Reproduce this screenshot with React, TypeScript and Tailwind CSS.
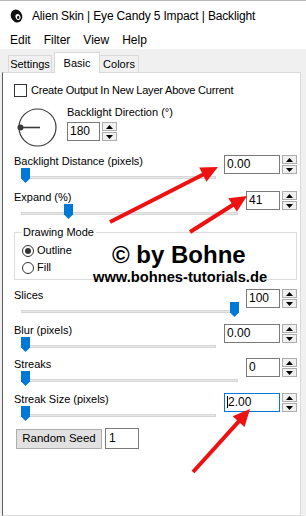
import React from 'react';

const ui = "font-['Liberation_Sans',Arial,sans-serif]";

function Tri({ up }: { up: boolean }) {
  return (
    <svg width="7" height="4" viewBox="0 0 7 4">
      <path d={up ? 'M0 4 L3.5 0 L7 4 Z' : 'M0 0 L3.5 4 L7 0 Z'} fill="#000" />
    </svg>
  );
}

function Spin({ value, w, focused }: { value: string; w: string; focused?: boolean }) {
  return (
    <div className="flex items-start gap-[2px]">
      <div
        className={`${w} h-[19px] border bg-white pl-[2px] text-[12px] leading-[17px] ${
          focused ? 'border-[#0078d7]' : 'border-[#7a7a7a]'
        }`}
      >
        {focused && <span className="inline-block w-px h-[12px] bg-black align-[-2px]" />}
        {value}
      </div>
      <div className="flex flex-col w-[15px] h-[19px] gap-[1px]">
        <div className="flex-1 border border-[#adadad] bg-[#f0f0f0] flex items-center justify-center">
          <Tri up />
        </div>
        <div className="flex-1 border border-[#adadad] bg-[#f0f0f0] flex items-center justify-center">
          <Tri up={false} />
        </div>
      </div>
    </div>
  );
}

function Slider({ pos }: { pos: number }) {
  return (
    <div className="relative h-[21px] ml-[7px] mr-[8px]">
      <div className="absolute left-0 right-0 top-[8px] h-[3px] bg-[#e7eaea] border border-[#d6d6d6]" />
      <svg className="absolute top-0" style={{ left: pos }} width="9" height="15" viewBox="0 0 9 15">
        <path d="M0 0 H9 V10.5 L4.5 15 L0 10.5 Z" fill="#0078d7" />
      </svg>
    </div>
  );
}

function Section({
  label,
  pos,
  value,
  w,
  h,
  focused,
}: {
  label: string;
  pos: number;
  value: string;
  w: string;
  h: string;
  focused?: boolean;
}) {
  return (
    <div className={`flex ${h}`}>
      <div className="flex-1 flex flex-col">
        <div className="h-[14px] leading-[14px] text-[11px] font-normal">{label}</div>
        <Slider pos={pos} />
      </div>
      <div className="pt-[1px]">
        <Spin value={value} w={w} focused={focused} />
      </div>
    </div>
  );
}

function Radio({ checked, label }: { checked?: boolean; label: string }) {
  return (
    <div className="flex items-center h-[13px] gap-[3px]">
      <div className="w-[12px] h-[12px] rounded-full border border-[#333] flex items-center justify-center">
        {checked && <div className="w-[6px] h-[6px] rounded-full bg-[#333]" />}
      </div>
      <span className="text-[11px] leading-[13px]">{label}</span>
    </div>
  );
}

function arrow(x1: number, y1: number, x2: number, y2: number) {
  const dx = x2 - x1;
  const dy = y2 - y1;
  const len = Math.hypot(dx, dy);
  const ux = dx / len;
  const uy = dy / len;
  const hl = 17;
  const hw = 8;
  const bx = x2 - ux * hl;
  const by = y2 - uy * hl;
  const nx = -uy;
  const ny = ux;
  return {
    line: `M${x1} ${y1} L${bx + ux * 2} ${by + uy * 2}`,
    head: `${x2},${y2} ${bx + nx * hw},${by + ny * hw} ${bx - nx * hw},${by - ny * hw}`,
  };
}

const arrows = [arrow(110, 222, 218, 167), arrow(190, 232, 247, 196), arrow(193, 472, 250, 409)];

export default function App() {
  return (
    <div className={`relative w-[306px] h-[516px] overflow-hidden bg-white text-black flex flex-col ${ui}`}>
      {/* title bar */}
      <div className="h-[30px] border-t border-[#b9b9b9] flex items-center pl-[10px] shrink-0">
        <svg width="13" height="14" viewBox="0 0 13 14">
          <ellipse cx="6.5" cy="7" rx="5.6" ry="6.6" transform="rotate(-25 6.5 7)" fill="#111" />
          <ellipse cx="8" cy="8" rx="2.4" ry="3" transform="rotate(-25 8 8)" fill="#fff" />
          <ellipse cx="8.2" cy="8.4" rx="1.2" ry="1.6" fill="#111" />
        </svg>
        <span className="ml-[9px] text-[12px] tracking-[-0.15px]">Alien Skin | Eye Candy 5 Impact | Backlight</span>
      </div>

      {/* menu */}
      <div className="h-[19px] flex items-center gap-[13px] pl-[10px] text-[12px] shrink-0">
        <span>Edit</span>
        <span>Filter</span>
        <span>View</span>
        <span>Help</span>
      </div>

      {/* tabs + panel */}
      <div className="flex-1 bg-[#f0f0f0] flex flex-col pl-[2px] pr-[5px]">
        <div className="flex items-end h-[23px] text-[11px]">
          <div className="ml-[6px] w-[44px] h-[17px] border border-b-0 border-[#d9d9d9] flex items-center justify-center">
            Settings
          </div>
          <div className="ml-[2px] w-[46px] h-[21px] border border-b-0 border-[#d9d9d9] bg-white flex items-center justify-center relative top-[1px]">
            Basic
          </div>
          <div className="w-[39px] h-[17px] border border-l-0 border-b-0 border-[#d9d9d9] flex items-center justify-center">
            Colors
          </div>
        </div>

        <div className="flex-1 bg-white border border-[#d9d9d9] border-l-[#5c5c5c] pl-[11px] pr-[3px] text-[11px]">
          {/* checkbox */}
          <div className="mt-[11px] flex items-center h-[13px] gap-[4px]">
            <div className="w-[13px] h-[13px] border border-[#333] bg-white" />
            <span className="leading-[13px] tracking-[-0.2px]">Create Output In New Layer Above Current</span>
          </div>

          {/* direction */}
          <div className="mt-[8px] flex">
            <svg className="mt-[2px] ml-[3px]" width="41" height="41" viewBox="0 0 41 41">
              <circle cx="20.5" cy="20.5" r="18.5" fill="none" stroke="#3a3a3a" strokeWidth="1.2" />
              <line x1="3.5" y1="20.5" x2="23" y2="20.5" stroke="#3a3a3a" strokeWidth="1.6" />
              <circle cx="3.5" cy="20.5" r="3" fill="#3a3a3a" />
            </svg>
            <div className="ml-[9px] flex flex-col">
              <div className="h-[14px] leading-[14px]">Backlight Direction (°)</div>
              <div className="mt-[3px]">
                <Spin value="180" w="w-[33px]" />
              </div>
            </div>
          </div>

          <div className="mt-[6px]">
            <Section label="Backlight Distance (pixels)" pos={0} value="0.00" w="w-[56px]" h="h-[36px]" />
            <Section label="Expand (%)" pos={43} value="41" w="w-[34px]" h="h-[36px]" />
          </div>

          {/* drawing mode group */}
          <div className="relative pt-[6px]">
            <div className="border border-[#dcdcdc] h-[48px] pl-[7px] pt-[11px] flex flex-col gap-[4px]">
              <Radio checked label="Outline" />
              <Radio label="Fill" />
            </div>
            <div className="absolute top-0 left-[7px] bg-white px-[2px] h-[14px] leading-[14px] -mt-[1px]">
              Drawing Mode
            </div>
          </div>

          <div className="mt-[8px]">
            <Section label="Slices" pos={209} value="100" w="w-[34px]" h="h-[35px]" />
            <Section label="Blur (pixels)" pos={0} value="0.00" w="w-[56px]" h="h-[34px]" />
            <Section label="Streaks" pos={0} value="0" w="w-[34px]" h="h-[35px]" />
            <Section label="Streak Size (pixels)" pos={0} value="2.00" w="w-[56px]" h="h-[35px]" focused />
          </div>

          <div className="mt-[2px] ml-[2px] flex gap-[3px]">
            <div className="w-[86px] h-[20px] bg-[#e1e1e1] border border-[#adadad] flex items-center justify-center text-[11.5px] font-normal">
              Random Seed
            </div>
            <div className="w-[34px] h-[21px] border border-[#7a7a7a] bg-white text-[12px] leading-[19px] pl-[3px] -mt-px">
              1
            </div>
          </div>
        </div>
      </div>

      {/* watermark */}
      <div className="absolute left-[112px] top-[243px] text-[24px] leading-[24px] font-bold">
        © by Bohne
      </div>
      <div className="absolute left-[93px] top-[270px] text-[14.7px] leading-[15px] font-bold">
        www.bohnes-tutorials.de
      </div>

      {/* arrows */}
      <svg className="absolute inset-0 pointer-events-none" width="306" height="516" viewBox="0 0 306 516">
        {arrows.map((a, i) => (
          <g key={i}>
            <path d={a.line} stroke="#ee1111" strokeWidth="4" fill="none" />
            <polygon points={a.head} fill="#ee1111" />
          </g>
        ))}
      </svg>
    </div>
  );
}
